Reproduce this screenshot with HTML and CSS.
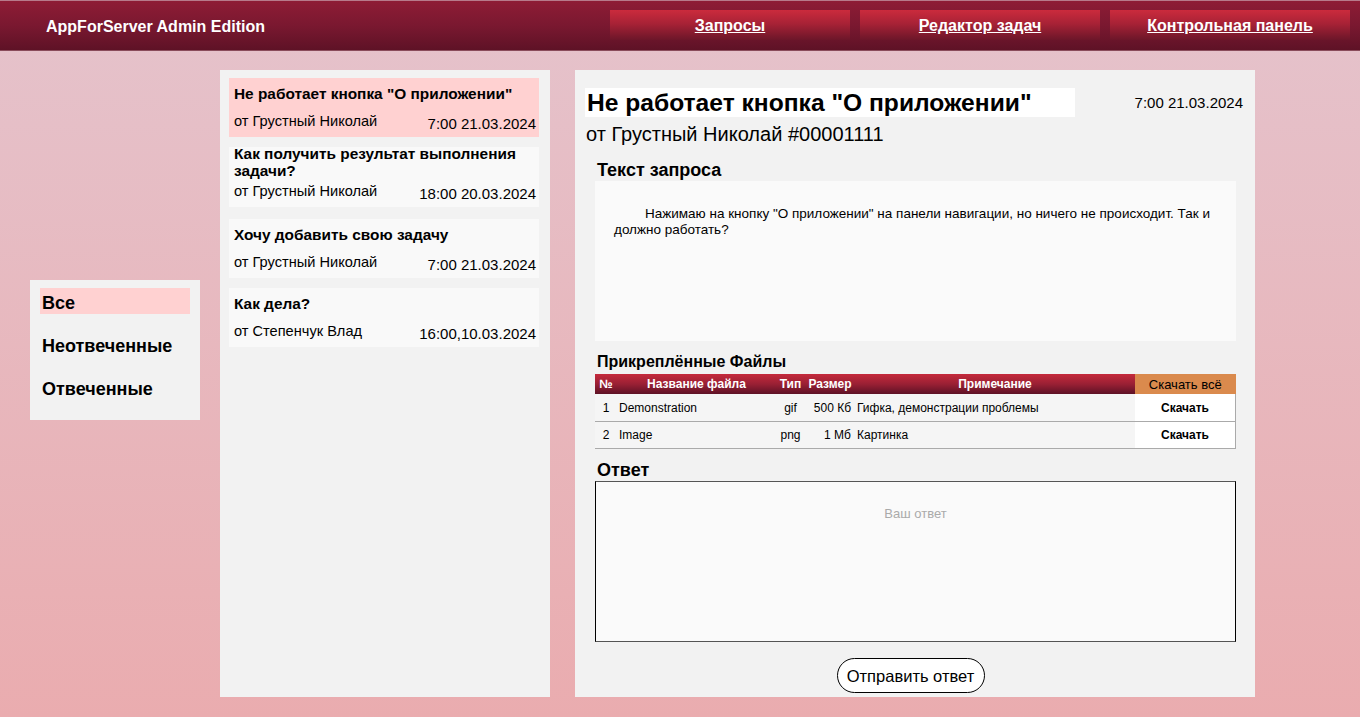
FILE: index.html
```html
<!DOCTYPE html>
<html lang="ru">
<head>
<meta charset="utf-8">
<title>AppForServer Admin Edition</title>
<link rel="stylesheet" href="styles.css">
</head>
<body>
<header class="topbar">
  <div class="logo">AppForServer Admin Edition</div>
  <nav class="nav">
    <a class="nav-btn" href="#">Запросы</a>
    <a class="nav-btn" href="#">Редактор задач</a>
    <a class="nav-btn" href="#">Контрольная панель</a>
  </nav>
</header>
<main class="main">
  <aside class="filters">
    <div class="filter active">Все</div>
    <div class="filter">Неотвеченные</div>
    <div class="filter">Отвеченные</div>
  </aside>
  <section class="list">
    <div class="req active">
      <div class="req-title">Не работает кнопка "О приложении"</div>
      <div class="req-meta"><span>от Грустный Николай</span><span class="req-date">7:00 21.03.2024</span></div>
    </div>
    <div class="req two">
      <div class="req-title">Как получить результат выполнения задачи?</div>
      <div class="req-meta"><span>от Грустный Николай</span><span class="req-date">18:00 20.03.2024</span></div>
    </div>
    <div class="req">
      <div class="req-title">Хочу добавить свою задачу</div>
      <div class="req-meta"><span>от Грустный Николай</span><span class="req-date">7:00 21.03.2024</span></div>
    </div>
    <div class="req">
      <div class="req-title">Как дела?</div>
      <div class="req-meta"><span>от Степенчук Влад</span><span class="req-date">16:00,10.03.2024</span></div>
    </div>
  </section>
  <section class="detail">
    <div class="detail-head">
      <h1 class="detail-title">Не работает кнопка "О приложении"</h1>
      <div class="detail-date">7:00 21.03.2024</div>
    </div>
    <div class="detail-author">от Грустный Николай #00001111</div>
    <h2 class="sec-title text-title">Текст запроса</h2>
    <div class="req-text">Нажимаю на кнопку "О приложении" на панели навигации, но ничего не происходит. Так и должно работать?</div>
    <h2 class="sec-title files-title">Прикреплённые Файлы</h2>
    <table class="files">
      <thead>
        <tr>
          <th class="c-n">№</th>
          <th class="c-name">Название файла</th>
          <th class="c-type">Тип</th>
          <th class="c-size">Размер</th>
          <th class="c-note">Примечание</th>
          <th class="c-dl all">Скачать всё</th>
        </tr>
      </thead>
      <tbody>
        <tr>
          <td class="c-n">1</td>
          <td class="c-name">Demonstration</td>
          <td class="c-type">gif</td>
          <td class="c-size">500 Кб</td>
          <td class="c-note">Гифка, демонстрации проблемы</td>
          <td class="c-dl">Скачать</td>
        </tr>
        <tr>
          <td class="c-n">2</td>
          <td class="c-name">Image</td>
          <td class="c-type">png</td>
          <td class="c-size">1 Мб</td>
          <td class="c-note">Картинка</td>
          <td class="c-dl">Скачать</td>
        </tr>
      </tbody>
    </table>
    <h2 class="sec-title answer-title">Ответ</h2>
    <textarea class="answer" placeholder="Ваш ответ"></textarea>
    <div class="send-row"><button class="send">Отправить ответ</button></div>
  </section>
</main>
</body>
</html>
```
FILE: styles.css
```css
* { box-sizing: border-box; }
html, body { margin: 0; padding: 0; }
body {
  width: 1360px;
  height: 717px;
  overflow: hidden;
  font-family: "Liberation Sans", Arial, sans-serif;
  color: #000;
  background: linear-gradient(180deg, #e5c3cc 0%, #eaacaf 100%);
}
.topbar {
  height: 51px;
  display: flex;
  align-items: flex-start;
  justify-content: space-between;
  background: linear-gradient(180deg, #8e1c35 0%, #7a1830 50%, #5e1226 100%);
  border-top: 1px solid #b77a8a;
  border-bottom: 1px solid #8a4c5b;
}
.logo {
  margin: 17px 0 0 46px;
  color: #fff;
  font-weight: bold;
  font-size: 16px;
}
.nav {
  display: flex;
  gap: 10px;
  padding: 9px 10px 0 0;
}
.nav-btn {
  width: 240px;
  height: 30px;
  display: flex;
  align-items: center;
  justify-content: center;
  padding-top: 2px;
  color: #fff;
  font-weight: bold;
  font-size: 16px;
  text-decoration: underline;
  background: linear-gradient(180deg, #cb2b3d 0%, #a82236 45%, #6c1629 100%);
}
.main {
  display: flex;
  align-items: flex-start;
  padding: 19px 0 0 30px;
  gap: 20px;
}
.filters {
  width: 170px;
  margin-top: 210px;
  background: #f2f2f2;
  padding: 8px 10px 10px 10px;
  height: 140px;
}
.filter {
  height: 26px;
  padding: 2px 0 0 2px;
  font-size: 18px;
  font-weight: bold;
  line-height: 26px;
  margin-bottom: 17px;
}
.filter.active { background: #ffd1d1; }
.list {
  width: 330px;
  height: 627px;
  background: #f2f2f2;
  padding: 8px 11px 0 9px;
  display: flex;
  flex-direction: column;
  gap: 10px;
}
.req {
  background: #f9f9f9;
  height: 59px;
  padding: 7px 3px 0 5px;
}
.req.active { background: #ffd1d1; }
.req.two { height: 60px; padding-top: 0; margin-bottom: 2px; }
.req-title {
  font-weight: bold;
  font-size: 15.4px;
  line-height: 18px;
  height: 28px;
}
.req.two .req-title { height: 36px; line-height: 17px; margin-top: -2px; margin-bottom: 2px; }
.req-meta {
  display: flex;
  justify-content: space-between;
  font-size: 14.6px;
  line-height: 16px;
}
.req-date { font-size: 15px; margin-top: 3px; }
.detail {
  width: 680px;
  height: 627px;
  margin-left: 5px;
  background: #f2f2f2;
  padding: 18px 19px 0 10px;
}
.detail-head {
  display: flex;
  justify-content: space-between;
  align-items: center;
}
.detail-title {
  margin: 0;
  width: 490px;
  height: 29px;
  background: #fff;
  padding-left: 2px;
  font-size: 24.6px;
  line-height: 29px;
  font-weight: bold;
  white-space: nowrap;
}
.detail-date { font-size: 15px; margin-right: -7px; }
.detail-author {
  font-size: 20px;
  line-height: 24px;
  margin-top: 5px;
  padding-left: 1px;
}
.sec-title {
  margin: 0;
  font-size: 18px;
  font-weight: bold;
  padding-left: 12px;
  line-height: 20px;
}
.text-title { margin-top: 14px; }
.req-text {
  margin: 1px 0 0 10px;
  height: 160px;
  background: #fafafa;
  padding: 25px 20px 0 19px;
  text-indent: 31px;
  font-size: 13.5px;
  line-height: 16px;
}
.files-title { margin-top: 11px; font-size: 16px; line-height: 20px; }
.files {
  margin: 2px 0 0 10px;
  width: 641px;
  border-collapse: collapse;
  font-size: 12px;
}
.files th {
  height: 20px;
  padding: 0;
  color: #fff;
  font-size: 12px;
  font-weight: bold;
  background: linear-gradient(180deg, #c52a3c 0%, #9a2034 50%, #5e1226 100%);
}
.files th.all {
  background: #da8a4d;
  color: #000;
  font-weight: normal;
  font-size: 13px;
}
.files td {
  height: 27px;
  padding: 1px 0 0;
  background: #f5f5f5;
  border-bottom: 1px solid #aaa;
}
.files tbody tr td:last-child { border-right: 1px solid #aaa; }
.c-n { width: 22px; text-align: center; }
.c-name { width: 159px; }
td.c-name { padding-left: 2px; }
.c-type { width: 29px; text-align: center; }
.c-size { width: 50px; text-align: center; }
td.c-size { text-align: right; padding-right: 4px; }
.c-note { width: 280px; }
td.c-note { padding-left: 2px; }
th.c-note { text-align: center; }
.c-dl { text-align: center; }
.files td.c-dl { background: #fff; font-weight: bold; font-size: 12px; }
.answer-title { margin-top: 11px; }
.answer {
  display: block;
  margin: 1px 0 0 10px;
  width: 641px;
  height: 161px;
  background: #fafafa;
  border: 1px solid #000;
  border-top-color: #555;
  border-bottom-color: #555;
  resize: none;
  padding: 24px 10px;
  text-align: center;
  font-family: "Liberation Sans", Arial, sans-serif;
  font-size: 13px;
}
.answer::placeholder { color: #aaa; }
.send-row {
  display: flex;
  justify-content: center;
  margin-top: 16px;
}
.send {
  width: 148px;
  height: 35px;
  border: 1px solid #000;
  border-radius: 18px;
  background: #fff;
  font-family: "Liberation Sans", Arial, sans-serif;
  font-size: 16.5px;
  color: #000;
  padding: 2px 0 0;
}
```
